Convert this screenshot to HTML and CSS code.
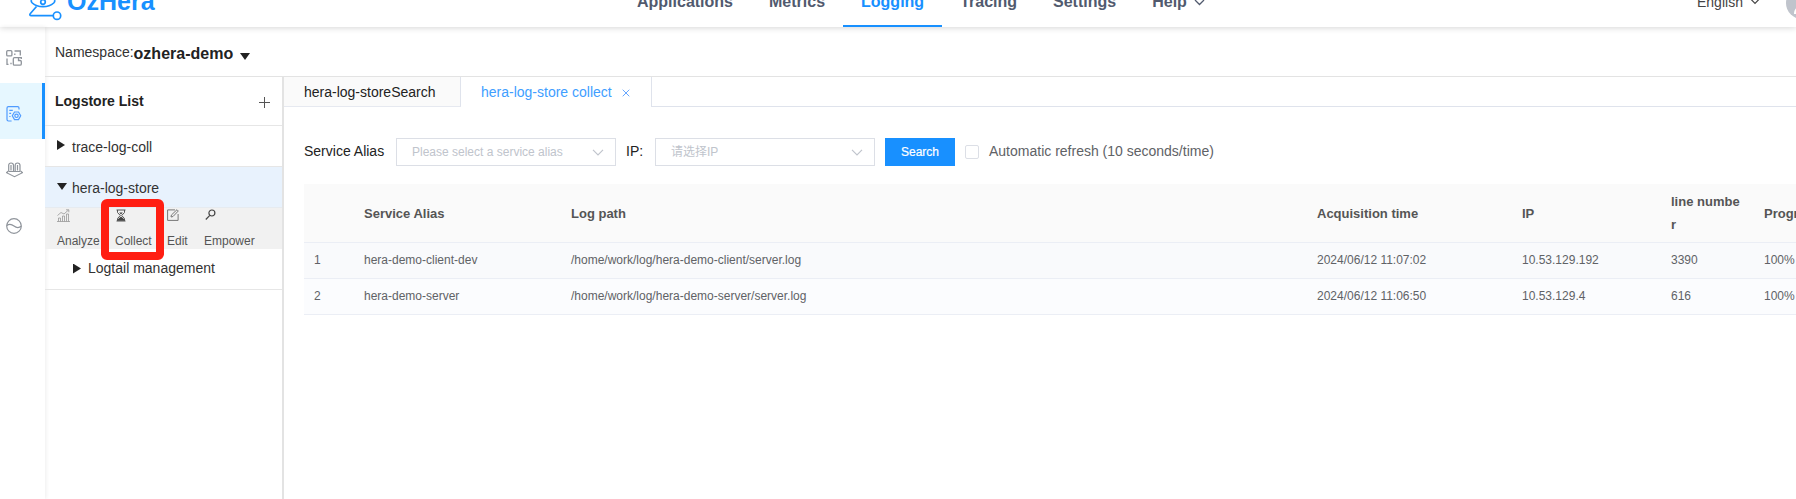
FILE: index.html
```html
<!DOCTYPE html>
<html lang="en">
<head>
<meta charset="utf-8">
<title>OzHera</title>
<link rel="stylesheet" href="styles.css">
</head>
<body>
<header class="header">
  <div class="logo">
    <svg class="logo-mark" width="34" height="24" viewBox="0 0 34 24" fill="none" stroke="#1890ff" stroke-width="1.700"><path d="M3.500 0C3 1 3.300 2 4.300 3 7 5.500 10.500 6.700 15 6.700S23 5.500 25.700 3c1-1 1.300-2 .8-3"/><circle cx="15" cy="2" r="2.300"/><path d="M8.500 6.500 2.200 13.700c-.8 1-.2 2 1 2H25"/><circle cx="29" cy="15.700" r="3.700"/></svg>
    <span class="logo-text">OzHera</span>
  </div>
  <nav class="nav">
    <a class="nav-item">Applications</a>
    <a class="nav-item">Metrics</a>
    <a class="nav-item active">Logging</a>
    <a class="nav-item">Tracing</a>
    <a class="nav-item">Settings</a>
    <a class="nav-item">Help <svg class="chev" width="11" height="7" viewBox="0 0 11 7" fill="none" stroke="#515a6e" stroke-width="1.300"><path d="m1 1 4.500 4.500L10 1"/></svg></a>
  </nav>
  <div class="user">
    <span>English</span>
    <svg class="chev" width="10" height="7" viewBox="0 0 11 7" fill="none" stroke="#444" stroke-width="1.300"><path d="m1 1 4.500 4.500L10 1"/></svg>
    <svg class="avatar" width="32" height="32" viewBox="0 0 32 32"><circle cx="16" cy="16" r="16" fill="#c0c4cc"/><path d="M8 27c0-5 3-8 8-8s8 3 8 8z" fill="#fff"/></svg>
  </div>
</header>
<div class="body">
  <aside class="rail">
    <div class="rail-item"><svg width="16" height="16" viewBox="0 0 16 16" fill="none" stroke="#8f949b" stroke-width="1.300"><rect x=".7" y=".7" width="5.200" height="5.200" rx="1"/><path d="M8.500 1h5.800v4.500M8.800 3.500V5M1 8.500v5.800h1.500M5 14.300v-1.500"/><path d="M15.300 9V7.700H8.500c-.8 0-1.200.4-1.200 1.200v5c0 .8.400 1.300 1.200 1.300h5.300c1 0 1.500-.5 1.500-1.300V11.500c0-.7-.5-1-1.300-1h-1.500V8"/></svg></div>
    <div class="rail-item active"><svg width="16" height="16" viewBox="0 0 16 16" fill="none" stroke="#4f9bff" stroke-width="1.200"><path d="M13 3.500V2c0-.9-.5-1.400-1.400-1.400H2.400C1.500.6 1 1.100 1 2v11.600c0 .9.500 1.400 1.400 1.400h3.200M3.300 4.300h3.500M3.300 7.300h1.800M3.300 10.500h1.200"/><path d="M8.500 6h4l2.200 3.800-2.200 3.800h-4L6.300 9.800z"/><circle cx="10.500" cy="9.800" r="1.700"/></svg></div>
    <div class="rail-item"><svg width="17" height="16" viewBox="0 0 17 16" fill="none" stroke="#8f949b" stroke-width="1.200"><path d="M2.700 9V3.300C2.700 2 3.600 1 5 1s2.500 1 2.500 2.300V9M9.200 9V3.300C9.200 2 10 1 11.500 1S14 2 14 3.300V9M2.700 9.500h11.600M5 3v5.500M11.500 3v5.500"/><path d="m2.500 9-2 1.700 8 4 8-4L14.500 9"/></svg></div>
    <div class="rail-item"><svg width="16" height="16" viewBox="0 0 16 16" fill="none" stroke="#8f949b" stroke-width="1.200"><circle cx="8" cy="8" r="7.300"/><path d="M.8 7.500C3 5.800 5.500 6 8 8s5 2 7.200.3"/></svg></div>
  </aside>
  <main class="main">
    <div class="namespace">
      <span class="ns-label">Namespace:</span><b class="ns-name">ozhera-demo</b><i class="caret ns-caret"></i>
    </div>
    <div class="work">
      <section class="stores">
        <div class="stores-head"><b>Logstore List</b><svg width="11" height="11" viewBox="0 0 11 11" stroke="#555" stroke-width="1"><path d="M0 5.500h11M5.500 0v11"/></svg></div>
        <div class="store"><i class="arrow-right"></i>trace-log-coll</div>
        <div class="store selected"><i class="caret"></i>hera-log-store</div>
        <div class="tools">
          <div class="tool analyze"><svg width="13" height="13" viewBox="0 0 13 13" fill="none" stroke="#999" stroke-width=".8"><path d="M1.500 12.500V9h2v3.500M5.500 12.500V7h2v5.500M9.500 12.500V5h2v7.500M0 12.500h13M.5 6.500 4 3.500l3 1.500 4.500-4M9 .8h2.800v2.500"/></svg><span>Analyze</span></div>
          <div class="tool collect"><svg width="10" height="13" viewBox="0 0 10 13" fill="none" stroke="#555" stroke-width="1"><path d="M.5 1h9M.5 12h9M1.500 1v2.500L4.300 6.500 1.500 9.500V12M8.500 1v2.500L5.700 6.500 8.500 9.500V12"/><path d="M2 11.800V10L5 7.500 8 10v1.800zM3.200 3.500h3.600L5 5.500z" fill="#444" stroke="none"/></svg><span>Collect</span></div>
          <div class="tool edit"><svg width="12" height="12" viewBox="0 0 12 12" fill="none" stroke="#777" stroke-width="1"><path d="M8 .9H.6v10.500h10.500V5"/><path d="m4 8 .4-2L10 .7l1.300 1.300L6 7.500z"/></svg><span>Edit</span></div>
          <div class="tool"><svg width="11" height="12" viewBox="0 0 11 12" fill="none" stroke="#444" stroke-width="1.200"><circle cx="6.900" cy="4" r="3"/><path d="m4.800 6.300-4 4.200"/></svg><span>Empower</span></div>
        </div>
        <div class="store child"><i class="arrow-right"></i>Logtail management</div>
        <div class="highlight"></div>
      </section>
      <section class="content">
        <div class="tabs">
          <div class="tab first">hera-log-storeSearch</div>
          <div class="tab active">hera-log-store collect<svg width="8" height="8" viewBox="0 0 8 8" stroke="#66a6ff" stroke-width="1"><path d="m.7.7 6.600 6.600M7.300.7.7 7.300"/></svg></div>
          <div class="tab-rest"></div>
        </div>
        <div class="filters">
          <span class="label">Service Alias</span>
          <div class="select">Please select a service alias<svg width="12" height="7" viewBox="0 0 12 7" fill="none" stroke="#c0c4cc" stroke-width="1.200"><path d="m1 .8 5 5 5-5"/></svg></div>
          <span class="label ip">IP:</span>
          <div class="select"><span class="cjk">请选择IP</span><svg width="12" height="7" viewBox="0 0 12 7" fill="none" stroke="#c0c4cc" stroke-width="1.200"><path d="m1 .8 5 5 5-5"/></svg></div>
          <button class="search">Search</button>
          <span class="checkbox"></span>
          <span class="auto">Automatic refresh (10 seconds/time)</span>
        </div>
        <div class="table">
          <div class="tr th"><span></span><span>Service Alias</span><span>Log path</span><span>Acquisition time</span><span>IP</span><span class="wrap">line number</span><span>Progress</span></div>
          <div class="tr striped"><span>1</span><span>hera-demo-client-dev</span><span>/home/work/log/hera-demo-client/server.log</span><span>2024/06/12 11:07:02</span><span>10.53.129.192</span><span>3390</span><span>100%</span></div>
          <div class="tr"><span>2</span><span>hera-demo-server</span><span>/home/work/log/hera-demo-server/server.log</span><span>2024/06/12 11:06:50</span><span>10.53.129.4</span><span>616</span><span>100%</span></div>
        </div>
      </section>
    </div>
  </main>
</div>
</body>
</html>
```
FILE: styles.css
```css
* { box-sizing: border-box; }
body {
  margin: 0;
  height: 499px;
  overflow: hidden;
  display: flex;
  flex-direction: column;
  font-family: "Liberation Sans", Arial, "Noto Sans CJK SC", sans-serif;
  font-size: 14px;
  color: #222;
  background: #fff;
}
svg { display: block; flex: none; }
.header {
  height: 27px;
  flex: none;
  display: flex;
  position: relative;
  z-index: 2;
  box-shadow: 0 1px 6px rgba(0, 0, 0, .16);
}
.logo { width: 619px; height: 27px; padding-left: 28px; display: flex; overflow: hidden; }
.logo-text { margin: -13px 0 0 5px; font-size: 25px; line-height: 28px; font-weight: bold; color: #1890ff; }
.nav { display: flex; font-size: 16px; font-weight: bold; color: #515a6e; line-height: 18px; overflow: hidden; }
.nav-item { display: flex; height: 34px; margin-top: -7px; padding: 0 18px; }
.nav-item.active { color: #1890ff; border-bottom: 2px solid #1890ff; }
.nav-item .chev { margin: 6px 0 0 7px; }
.user { display: flex; margin-left: auto; width: 99px; height: 27px; overflow: hidden; line-height: 16px; color: #444; }
.user span { margin-top: -6px; }
.user .chev { margin: -2px 0 0 7px; }
.avatar { margin: -13px 0 0 26px; }

.body { flex: 1; display: flex; min-height: 0; }
.rail { width: 45px; flex: none; box-shadow: 1px 0 4px rgba(0, 0, 0, .07); }
.rail-item { height: 56px; padding: 6px 0 0 6px; display: flex; align-items: center; }
.rail-item.active { background: #e6f7ff; border-right: 3px solid #1890ff; }
.main { flex: 1; min-width: 0; display: flex; flex-direction: column; }
.namespace { height: 50px; border-bottom: 1px solid #e3e3e3; display: flex; padding: 17px 0 0 10px; color: #333; }
.ns-label { line-height: 16px; }
.ns-name { font-size: 16px; line-height: 20px; color: #222; }
.caret { width: 0; height: 0; border: 5px solid transparent; border-top: 7px solid #222; border-bottom: 0; }
.ns-caret { margin: 9px 0 0 7px; }
.work { flex: 1; display: flex; min-height: 0; }
.stores { width: 239px; flex: none; border-right: 2px solid #e3e3e3; position: relative; color: #333; }
.stores-head { height: 49px; border-bottom: 1px solid #e6e6e6; display: flex; justify-content: space-between; align-items: center; padding: 0 12px 0 10px; color: #222; }
.stores-head svg { margin-top: 3px; }
.store { height: 41px; padding: 1px 0 0 12px; display: flex; align-items: center; gap: 6px; border-bottom: 1px solid #e6e6e6; }
.store i { margin-top: -3px; }
.store.selected { background: #e8f2fd; border-bottom-color: #e6ebf0; }
.store.child { padding: 0 0 2px 28px; }
.arrow-right { width: 9px; height: 10px; background: #222; clip-path: polygon(0 0, 8px 50%, 0 100%); }
.store .caret { margin-left: 0; margin-right: -1px; }
.store.child .arrow-right { margin-top: 1px; }
.tools { height: 41px; background: #f1f1f1; display: flex; font-size: 12px; color: #555; padding: 1px 0 0 12px; }
.tool { display: flex; flex-direction: column; justify-content: space-between; height: 39px; }
.tool span { line-height: 14px; }
.tool svg { margin-left: 1px; }
.tool.analyze svg { margin-left: 0; }
.analyze { width: 58px; }
.collect { width: 52px; }
.edit { width: 37px; }
.tool.edit svg { margin-left: 0; }
.highlight { position: absolute; left: 56px; top: 122px; width: 63px; height: 61px; border: 8px solid #ff1e12; border-radius: 6px; }

.content { flex: 1; min-width: 0; }
.tabs { display: flex; height: 30px; }
.tab { line-height: 30px; height: 30px; border-right: 1px solid #dfe3ec; }
.tab.first { width: 177px; padding-left: 20px; background: #fafafa; border-bottom: 1px solid #e6e9f0; }
.tab.active { width: 191px; padding-left: 20px; display: flex; color: #409eff; }
.tab.active svg { margin: 12px 0 0 10px; }
.tab-rest { flex: 1; border-bottom: 1px solid #dfe3ec; }
.filters { display: flex; align-items: center; height: 28px; margin: 31px 0 18px 20px; }
.label { width: 92px; padding-bottom: 2px; }
.label.ip { width: 29px; margin-left: 10px; }
.select { width: 220px; height: 28px; border: 1px solid #dcdfe6; display: flex; justify-content: space-between; align-items: center; padding: 0 11px 0 15px; font-size: 12px; color: #c0c4cc; }
.cjk { padding-bottom: 3px; }
.search { width: 70px; height: 28px; margin: 0 10px; padding: 0; border: 0; background: #1890ff; color: #fff; font: 12px "Liberation Sans", Arial, sans-serif; -webkit-text-stroke: .2px #fff; }
.checkbox { width: 14px; height: 14px; border: 1px solid #dcdfe6; border-radius: 2px; margin: 0 10px 1px 0; }
.auto { color: #606266; padding-bottom: 2px; }
.table { margin-left: 20px; overflow: hidden; }
.tr { width: 1600px; height: 36px; display: grid; grid-template-columns: 50px 207px 746px 205px 149px 93px 150px; align-items: center; border-bottom: 1px solid #ebeef5; background: #fbfcfe; font-size: 12px; color: #606266; }
.tr span { padding: 0 0 2px 10px; }
.tr.striped { background: #f9fafc; }
.tr.th { height: 59px; background: #fafafa; font-size: 13px; line-height: 23px; font-weight: bold; color: #555; }
.tr.th span { padding-bottom: 0; }
.tr.th .wrap { word-break: break-all; padding-right: 12px; }
```
